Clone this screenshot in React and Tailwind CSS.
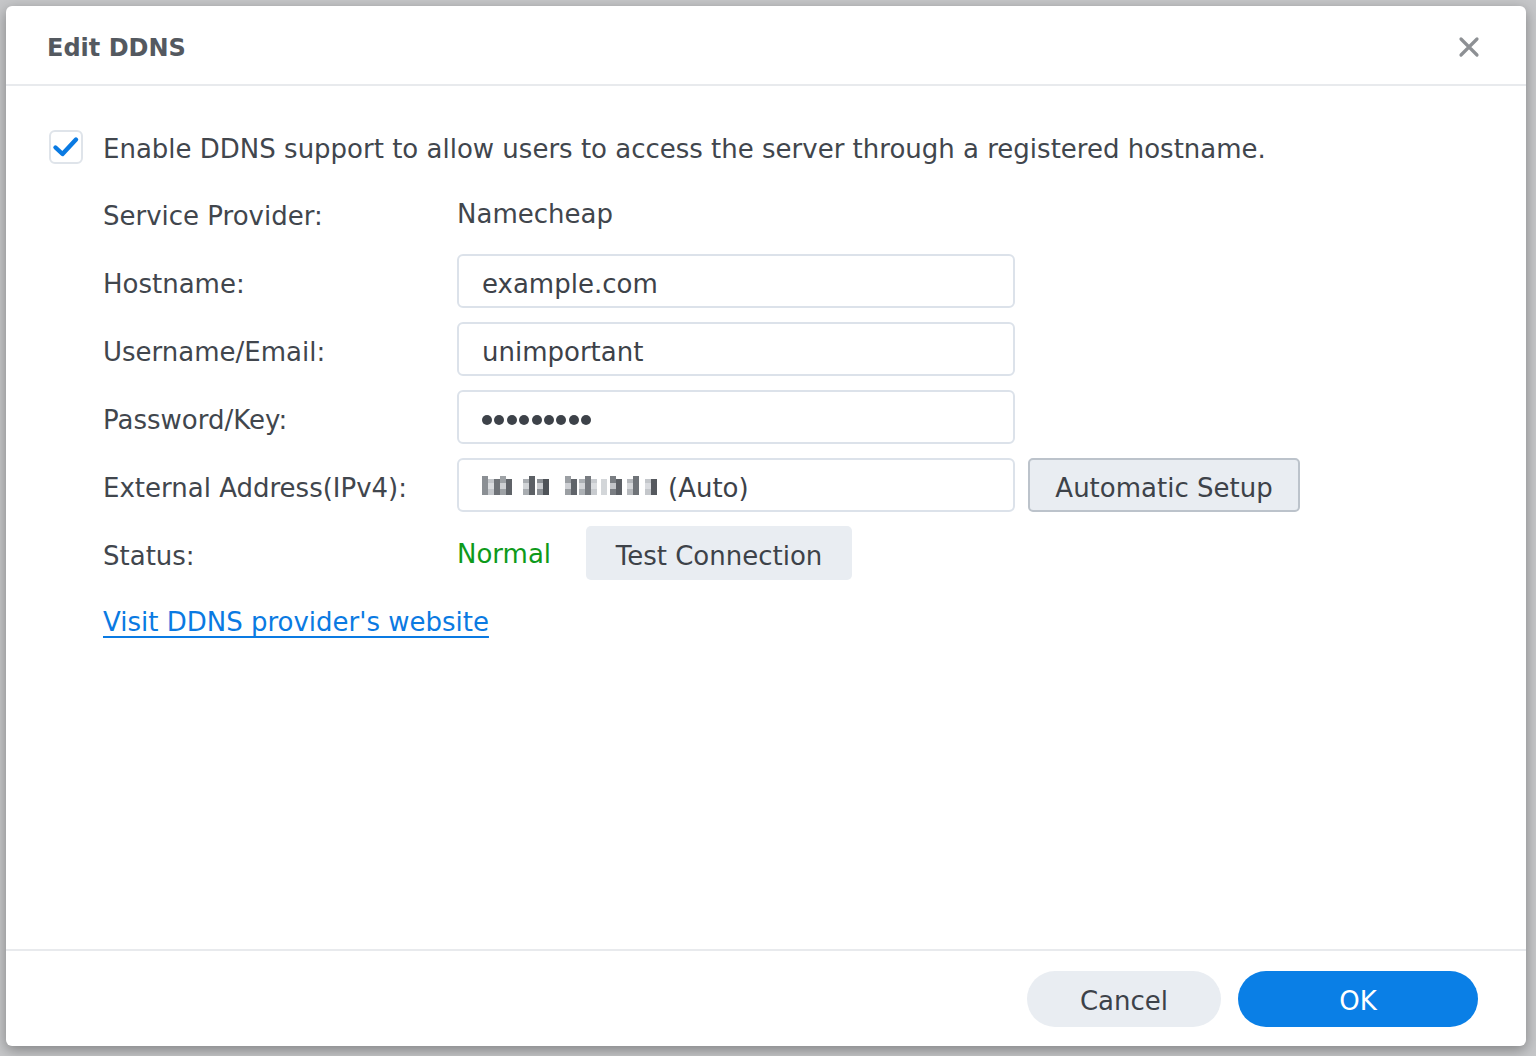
import React from 'react';
import { useState } from 'react';

const labelStyle = "w-[354px] shrink-0 pt-[6px] text-[#41464d]";
const inputStyle = "w-[558px] h-[54px] rounded-md border-2 border-[#dce2ea] bg-white px-[23px] pt-[6px] text-[26px] text-[#3d4249] outline-none font-['DejaVu_Sans',sans-serif]";

// pixelated ip, blurred in the original
const IpBlur = () => {
  const cells = [
    [0, '#8b8f94'], [6, '#c3c6ca'], [12, '#6e7277'], [18, '#9ea2a6'], [24, '#5f6368'],
    [41, '#a9adb1'], [47, '#5c6065'], [55, '#8d9196'], [61, '#4f5358'],
    [83, '#9b9fa3'], [89, '#60646a'], [97, '#adb1b5'], [103, '#777b80'], [109, '#c8cbcf'],
    [119, '#d3d6d9'], [128, '#7a7e83'], [134, '#5c6065'], [145, '#b6b9bd'], [151, '#6f7378'], [163, '#c4c7cb'], [169, '#55595e'],
  ];
  return (
    <svg width="176" height="19" viewBox="0 0 176 19" className="mr-[10px] -mt-[5px]">
      {cells.map(([x, c], i) => (
        <g key={i}>
          <rect x={x} y={i % 3 === 0 ? 0 : 3} width="6" height={i % 3 === 0 ? 19 : 16} fill={c} />
          <rect x={x} y="7" width="6" height="6" fill={i % 2 ? '#e2e4e7' : c} opacity="0.7" />
        </g>
      ))}
    </svg>
  );
};

const App = () => {
  const [enabled, setEnabled] = useState(true);
  const [hostname, setHostname] = useState('example.com');
  const [username, setUsername] = useState('unimportant');

  return (
    <div className="w-full h-screen bg-[#c6c7c9] p-[6px] font-['DejaVu_Sans',sans-serif]">
      <div className="w-[1520px] h-[1040px] bg-white rounded-md shadow-[0_4px_14px_rgba(0,0,0,0.35)] flex flex-col">
        {/* header */}
        <div className="h-[80px] shrink-0 flex items-center justify-between pl-[41px] pr-[46px] border-b-2 border-[#e8eaed]">
          <h1 className="text-[24px] font-bold text-[#545960] pt-[6px]">Edit DDNS</h1>
          <button className="w-[22px] h-[22px] mt-[4px] flex items-center justify-center">
            <svg width="22" height="22" viewBox="0 0 22 22">
              <path d="M3 3 L19 19 M19 3 L3 19" stroke="#8d9094" strokeWidth="3.2" strokeLinecap="round" />
            </svg>
          </button>
        </div>

        {/* body */}
        <div className="flex-1 pl-[43px] pt-[44px] text-[26px] text-[#41464d]">
          <label className="flex items-center h-[34px] cursor-pointer">
            <span
              onClick={() => setEnabled(!enabled)}
              className="w-[34px] h-[34px] shrink-0 rounded-md border-2 border-[#dfe4ea] flex items-center justify-center mr-[20px]"
            >
              {enabled && (
                <svg width="28" height="24" viewBox="0 0 28 24">
                  <path d="M3.5 12.5 L10.5 19 L24 4.5" fill="none" stroke="#0a7ae2" strokeWidth="4.4" strokeLinecap="round" strokeLinejoin="round" />
                </svg>
              )}
            </span>
            <span className="pt-[4px]">Enable DDNS support to allow users to access the server through a registered hostname.</span>
          </label>

          <div className="pl-[54px] mt-[22px] flex flex-col gap-[14px]">
            <div className="flex items-center h-[54px]">
              <span className={labelStyle}>Service Provider:</span>
              <span className="text-[#41464d] pt-[2px]">Namecheap</span>
            </div>
            <div className="flex items-center h-[54px]">
              <span className={labelStyle}>Hostname:</span>
              <input className={inputStyle} value={hostname} onChange={(e) => setHostname(e.target.value)} />
            </div>
            <div className="flex items-center h-[54px]">
              <span className={labelStyle}>Username/Email:</span>
              <input className={inputStyle} value={username} onChange={(e) => setUsername(e.target.value)} />
            </div>
            <div className="flex items-center h-[54px]">
              <span className={labelStyle}>Password/Key:</span>
              <div className="w-[558px] h-[54px] rounded-md border-2 border-[#dce2ea] bg-white pl-[23px] pt-[6px] flex items-center gap-[2.4px]">
                {[0, 1, 2, 3, 4, 5, 6, 7, 8].map((i) => (
                  <span key={i} className="w-[10px] h-[10px] rounded-full bg-[#3d4249]" />
                ))}
              </div>
            </div>
            <div className="flex items-center h-[54px]">
              <span className={labelStyle}>External Address(IPv4):</span>
              <div className="w-[558px] h-[54px] rounded-md border-2 border-[#dce2ea] bg-white px-[23px] pt-[6px] flex items-center text-[#3d4249]">
                <IpBlur />
                (Auto)
              </div>
              <button className="ml-[13px] w-[272px] h-[54px] pt-[6px] rounded-[5px] border-2 border-[#bcc3cb] bg-[#e9edf2] text-[#3d4249]">
                Automatic Setup
              </button>
            </div>
            <div className="flex items-center h-[54px]">
              <span className={labelStyle}>Status:</span>
              <span className="w-[129px] text-[#0e9a1b] pt-[2px]">Normal</span>
              <button className="w-[266px] h-[54px] pt-[6px] rounded-[5px] bg-[#e9edf2] text-[#3d4249]">
                Test Connection
              </button>
            </div>
            <a href="#" className="mt-[11px] self-start text-[#0a7ae2] underline underline-offset-[5px] decoration-2 leading-[34px]">
              Visit DDNS provider's website
            </a>
          </div>
        </div>

        {/* footer */}
        <div className="h-[97px] shrink-0 border-t-2 border-[#e8eaed] flex items-center justify-end gap-[17px] pr-[48px] pt-[1px]">
          <button className="w-[194px] h-[56px] pt-[4px] rounded-full bg-[#e9edf2] text-[26px] text-[#3d4249]">Cancel</button>
          <button className="w-[240px] h-[56px] pt-[4px] rounded-full bg-[#0a7fe6] text-[26px] text-white">OK</button>
        </div>
      </div>
    </div>
  );
};

export default App;
